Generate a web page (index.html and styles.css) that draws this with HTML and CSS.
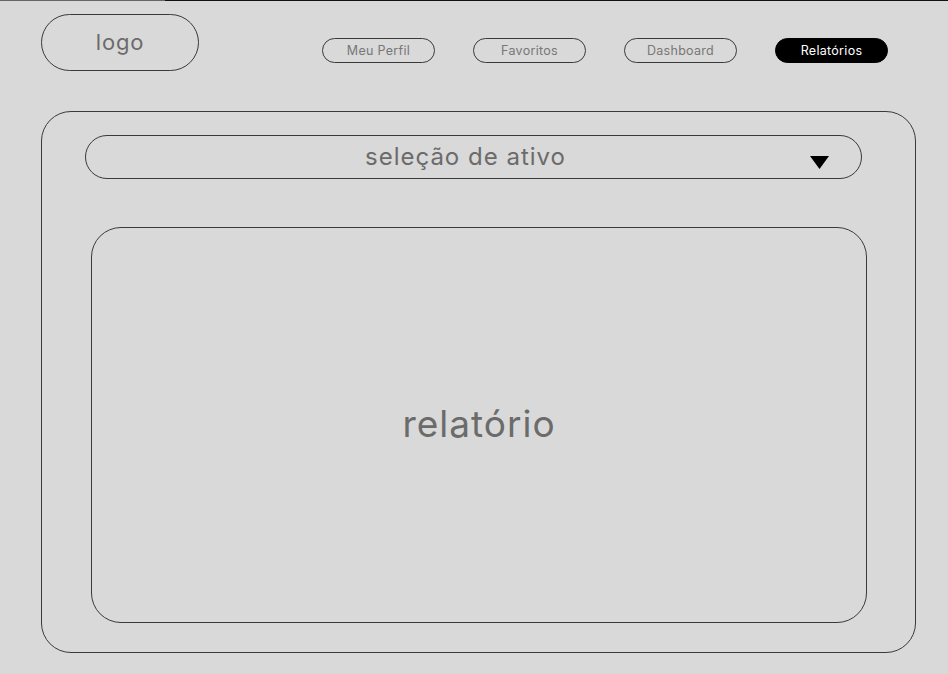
FILE: index.html
```html
<!DOCTYPE html>
<html lang="pt">
<head>
<meta charset="utf-8">
<title>Relatórios</title>
<link rel="stylesheet" href="styles.css">
</head>
<body>
<div class="topline"><span class="topline-light"></span><span class="topline-dark"></span></div>
<header class="header">
  <div class="logo">logo</div>
  <nav class="nav">
    <a class="nav-btn">Meu Perfil</a>
    <a class="nav-btn">Favoritos</a>
    <a class="nav-btn">Dashboard</a>
    <a class="nav-btn active">Relatórios</a>
  </nav>
</header>
<main class="card">
  <div class="select">
    <span class="select-label">seleção de ativo</span>
    <svg class="select-arrow" width="19" height="13" viewBox="0 0 19 13"><polygon points="0,0 19,0 9.5,13" fill="#000"/></svg>
  </div>
  <section class="report">
    <span class="report-label">relatório</span>
  </section>
</main>
</body>
</html>
```
FILE: styles.css
```css
* { box-sizing: border-box; }
html, body { margin: 0; padding: 0; }
body {
  background: #d9d9d9;
  font-family: Inter, "Noto Sans", sans-serif;
  width: 948px;
  height: 674px;
  overflow: hidden;
}
.topline { display: flex; height: 1px; }
.topline-light { width: 165px; background: #666; }
.topline-dark { flex: 1; background: #111; }
.header {
  display: flex;
  align-items: flex-start;
  padding: 13px 0 0 41px;
}
.logo {
  width: 158px;
  height: 57px;
  border: 1px solid #3a3a3a;
  border-radius: 29px;
  display: flex;
  align-items: center;
  justify-content: center;
  font-size: 22px;
  letter-spacing: 0.8px;
  color: #6b6b6b;
  padding-bottom: 2px;
}
.nav {
  display: flex;
  gap: 38px;
  margin-left: 123px;
  margin-top: 24px;
}
.nav-btn {
  width: 113px;
  height: 25px;
  border: 1px solid #3a3a3a;
  border-radius: 13px;
  display: flex;
  align-items: center;
  justify-content: center;
  font-size: 12.5px;
  letter-spacing: 0.3px;
  color: #777;
}
.nav-btn.active {
  background: #000;
  border-color: #000;
  color: #fff;
}
.card {
  margin: 40px 0 0 41px;
  width: 875px;
  height: 542px;
  border: 1px solid #3a3a3a;
  border-radius: 30px;
  padding-top: 23px;
  display: flex;
  flex-direction: column;
}
.select {
  margin-left: 43px;
  width: 777px;
  height: 44px;
  border: 1px solid #3a3a3a;
  border-radius: 22px;
  display: flex;
  align-items: center;
  justify-content: center;
  padding-right: 16px;
  position: relative;
}
.select-label {
  font-size: 24px;
  letter-spacing: 1px;
  color: #6b6b6b;
  padding-bottom: 2px;
}
.select-arrow {
  position: absolute;
  left: 724px;
  top: 20px;
}
.report {
  margin: 48px 0 0 49px;
  width: 776px;
  height: 396px;
  border: 1px solid #3a3a3a;
  border-radius: 30px;
  display: flex;
  align-items: center;
  justify-content: center;
}
.report-label {
  font-size: 37px;
  letter-spacing: 1px;
  color: #6b6b6b;
  padding-bottom: 4px;
}
```
